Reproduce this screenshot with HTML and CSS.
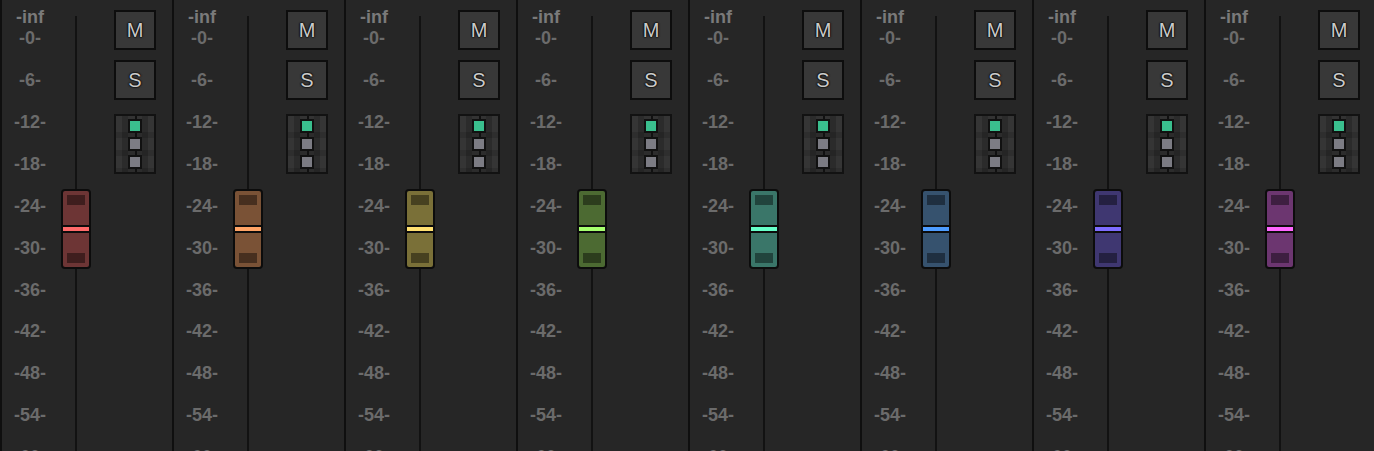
FILE: index.html
```html
<!DOCTYPE html>
<html>
<head>
<meta charset="utf-8">
<title>Mixer</title>
<link rel="stylesheet" href="styles.css">
</head>
<body>
<div class="mixer">
  <div class="strip ch-red">
    <div class="scale"><div class="inf">-inf</div><ul class="marks"><li>-0-</li><li>-6-</li><li>-12-</li><li>-18-</li><li>-24-</li><li>-30-</li><li>-36-</li><li>-42-</li><li>-48-</li><li>-54-</li><li>-60-</li></ul></div>
    <div class="fader"><div class="knob"><span class="grip"></span><span class="stripe"></span><span class="grip"></span></div></div>
    <div class="controls"><div class="btn">M</div><div class="btn">S</div><div class="route"><span class="led on"></span><span class="led"></span><span class="led"></span></div></div>
  </div>
  <div class="strip ch-orange">
    <div class="scale"><div class="inf">-inf</div><ul class="marks"><li>-0-</li><li>-6-</li><li>-12-</li><li>-18-</li><li>-24-</li><li>-30-</li><li>-36-</li><li>-42-</li><li>-48-</li><li>-54-</li><li>-60-</li></ul></div>
    <div class="fader"><div class="knob"><span class="grip"></span><span class="stripe"></span><span class="grip"></span></div></div>
    <div class="controls"><div class="btn">M</div><div class="btn">S</div><div class="route"><span class="led on"></span><span class="led"></span><span class="led"></span></div></div>
  </div>
  <div class="strip ch-yellow">
    <div class="scale"><div class="inf">-inf</div><ul class="marks"><li>-0-</li><li>-6-</li><li>-12-</li><li>-18-</li><li>-24-</li><li>-30-</li><li>-36-</li><li>-42-</li><li>-48-</li><li>-54-</li><li>-60-</li></ul></div>
    <div class="fader"><div class="knob"><span class="grip"></span><span class="stripe"></span><span class="grip"></span></div></div>
    <div class="controls"><div class="btn">M</div><div class="btn">S</div><div class="route"><span class="led on"></span><span class="led"></span><span class="led"></span></div></div>
  </div>
  <div class="strip ch-green">
    <div class="scale"><div class="inf">-inf</div><ul class="marks"><li>-0-</li><li>-6-</li><li>-12-</li><li>-18-</li><li>-24-</li><li>-30-</li><li>-36-</li><li>-42-</li><li>-48-</li><li>-54-</li><li>-60-</li></ul></div>
    <div class="fader"><div class="knob"><span class="grip"></span><span class="stripe"></span><span class="grip"></span></div></div>
    <div class="controls"><div class="btn">M</div><div class="btn">S</div><div class="route"><span class="led on"></span><span class="led"></span><span class="led"></span></div></div>
  </div>
  <div class="strip ch-teal">
    <div class="scale"><div class="inf">-inf</div><ul class="marks"><li>-0-</li><li>-6-</li><li>-12-</li><li>-18-</li><li>-24-</li><li>-30-</li><li>-36-</li><li>-42-</li><li>-48-</li><li>-54-</li><li>-60-</li></ul></div>
    <div class="fader"><div class="knob"><span class="grip"></span><span class="stripe"></span><span class="grip"></span></div></div>
    <div class="controls"><div class="btn">M</div><div class="btn">S</div><div class="route"><span class="led on"></span><span class="led"></span><span class="led"></span></div></div>
  </div>
  <div class="strip ch-blue">
    <div class="scale"><div class="inf">-inf</div><ul class="marks"><li>-0-</li><li>-6-</li><li>-12-</li><li>-18-</li><li>-24-</li><li>-30-</li><li>-36-</li><li>-42-</li><li>-48-</li><li>-54-</li><li>-60-</li></ul></div>
    <div class="fader"><div class="knob"><span class="grip"></span><span class="stripe"></span><span class="grip"></span></div></div>
    <div class="controls"><div class="btn">M</div><div class="btn">S</div><div class="route"><span class="led on"></span><span class="led"></span><span class="led"></span></div></div>
  </div>
  <div class="strip ch-indigo">
    <div class="scale"><div class="inf">-inf</div><ul class="marks"><li>-0-</li><li>-6-</li><li>-12-</li><li>-18-</li><li>-24-</li><li>-30-</li><li>-36-</li><li>-42-</li><li>-48-</li><li>-54-</li><li>-60-</li></ul></div>
    <div class="fader"><div class="knob"><span class="grip"></span><span class="stripe"></span><span class="grip"></span></div></div>
    <div class="controls"><div class="btn">M</div><div class="btn">S</div><div class="route"><span class="led on"></span><span class="led"></span><span class="led"></span></div></div>
  </div>
  <div class="strip ch-magenta">
    <div class="scale"><div class="inf">-inf</div><ul class="marks"><li>-0-</li><li>-6-</li><li>-12-</li><li>-18-</li><li>-24-</li><li>-30-</li><li>-36-</li><li>-42-</li><li>-48-</li><li>-54-</li><li>-60-</li></ul></div>
    <div class="fader"><div class="knob"><span class="grip"></span><span class="stripe"></span><span class="grip"></span></div></div>
    <div class="controls"><div class="btn">M</div><div class="btn">S</div><div class="route"><span class="led on"></span><span class="led"></span><span class="led"></span></div></div>
  </div>
</div>
</body>
</html>
```

FILE: styles.css
```css
html, body {
  margin: 0;
  padding: 0;
  height: 100%;
  overflow: hidden;
  background: #262626;
  font-family: "Liberation Sans", Arial, sans-serif;
}

.mixer {
  display: flex;
  flex-wrap: nowrap;
  height: 451px;
}

.strip {
  flex: 0 0 172px;
  box-sizing: border-box;
  width: 172px;
  height: 451px;
  border-left: 2px solid #0f0f0f;
  display: flex;
  align-items: stretch;
  background: #262626;
  overflow: hidden;
}

/* scale labels */
.scale {
  width: 56px;
  flex: 0 0 56px;
  padding-top: 8px;
  text-align: center;
  font-weight: bold;
  font-size: 18px;
}

.inf {
  height: 18px;
  line-height: 18px;
  color: #7a7a7a;
}

.marks {
  list-style: none;
  margin: -7.75px 0 0 0;
  padding: 0;
  color: #6b6b6b;
}

.marks li {
  height: 41.9px;
  line-height: 41.9px;
}

/* fader */
.fader {
  position: relative;
  width: 36px;
  flex: 0 0 36px;
  margin-top: 16px;
  background: linear-gradient(to right, transparent 17px, #121212 17px, #121212 19px, transparent 19px);
}

.knob {
  position: relative;
  box-sizing: border-box;
  width: 30px;
  height: 80px;
  margin: 173px 0 0 3px;
  border: 2px solid #0c0c0c;
  border-radius: 4px;
  background: var(--fill);
  display: flex;
  flex-direction: column;
  align-items: center;
  padding: 4px 0 4px 0;
}

.knob::before {
  content: "";
  position: absolute;
  left: -7px;
  right: -6px;
  top: 37px;
  height: 1px;
  background: #111;
  z-index: -1;
}

.grip {
  display: block;
  width: 18px;
  height: 10px;
  background: rgba(0, 0, 0, 0.42);
}

.stripe {
  display: block;
  align-self: stretch;
  height: 4px;
  margin: 20px 0;
  border-top: 2px solid #0c0c0c;
  border-bottom: 2px solid #0c0c0c;
  background: var(--line);
}

/* controls */
.controls {
  width: 42px;
  flex: 0 0 42px;
  margin-left: 20px;
  padding-top: 10px;
  display: flex;
  flex-direction: column;
}

.btn {
  box-sizing: border-box;
  width: 42px;
  height: 40px;
  border: 2px solid #0d0d0d;
  background: #383838;
  color: #cacaca;
  font-family: "Liberation Sans", Arial, sans-serif;
  font-size: 20px;
  line-height: 36px;
  text-align: center;
  text-shadow: 0 0 2px #000, 0 0 2px #000, 0 0 1px #000;
  margin-bottom: 10px;
}

.btn + .btn {
  margin-bottom: 14px;
}

.route {
  position: relative;
  box-sizing: border-box;
  width: 42px;
  height: 60px;
  border: 2px solid #121212;
  padding-top: 3px;
  display: flex;
  flex-direction: column;
  align-items: center;
  gap: 4px;
  background:
    linear-gradient(to bottom, transparent 0 16px, rgba(0,0,0,0.14) 16px 22px, transparent 22px 34px, rgba(0,0,0,0.14) 34px 40px, transparent 40px 52px, rgba(0,0,0,0.14) 52px),
    linear-gradient(to right, #353535 0 6px, #2b2b2b 6px 12px, #333333 12px 26px, #2b2b2b 26px 32px, #353535 32px 38px);
}

.route::before {
  content: "";
  position: absolute;
  top: 0;
  bottom: 0;
  left: 19px;
  width: 2px;
  background: #111;
}

.led {
  position: relative;
  display: block;
  box-sizing: border-box;
  width: 14px;
  height: 14px;
  border: 2px solid #111;
  background: #7c7c84;
}

.led.on {
  background: #3abf8e;
}

/* channel colours */
.ch-red     { --fill: #6d3535; --line: #ff6a6a; }
.ch-orange  { --fill: #7a5236; --line: #ffa466; }
.ch-yellow  { --fill: #7a7038; --line: #ffe070; }
.ch-green   { --fill: #4c6a32; --line: #a6ff6e; }
.ch-teal    { --fill: #3a7669; --line: #66ffc8; }
.ch-blue    { --fill: #36526e; --line: #4d9cff; }
.ch-indigo  { --fill: #3f3771; --line: #7e6cff; }
.ch-magenta { --fill: #6c3670; --line: #ff66ff; }
```
